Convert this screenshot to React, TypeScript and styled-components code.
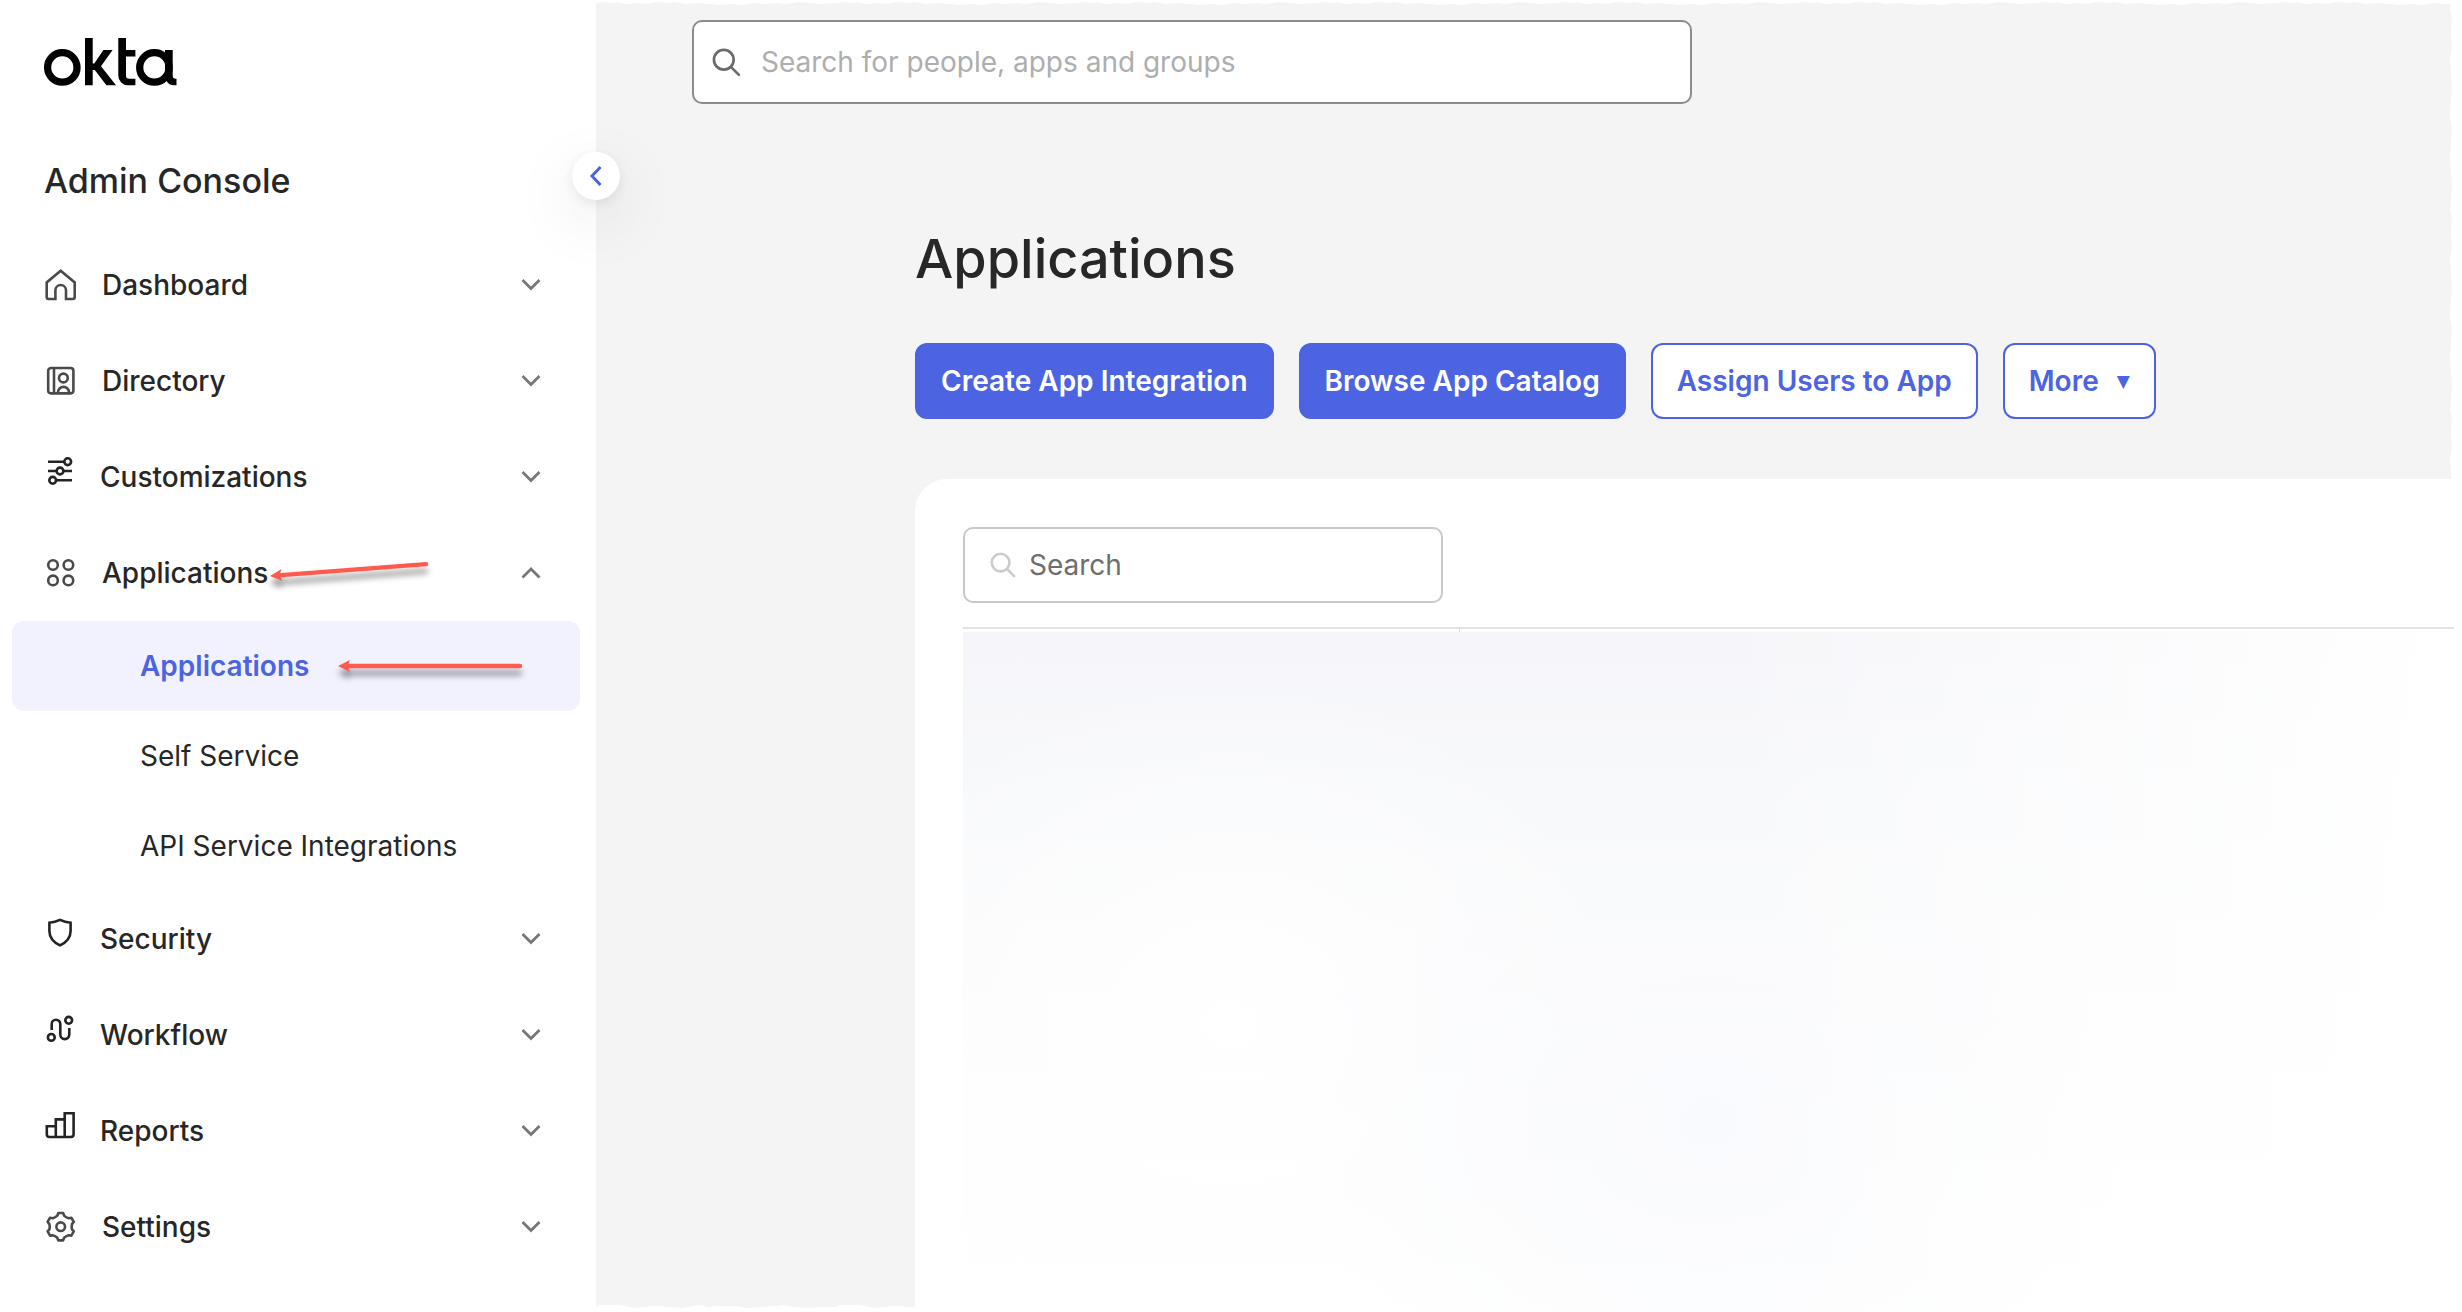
import React, { useState } from "react";
import styled, { createGlobalStyle, css } from "styled-components";

const color = {
  ink: "#272727",
  icon: "#4a4a4a",
  iconDark: "#242424",
  chevron: "#777777",
  blue: "#4c64e1",
  blueTint: "#f2f2ff",
  page: "#f4f4f4",
  line: "#e1e1e1",
  arrow: "#ff5a4c",
};

const GlobalStyle = createGlobalStyle`
  * { box-sizing: border-box; }
  body {
    margin: 0;
    background: #ffffff;
    color: ${color.ink};
    font-family: Inter, "Liberation Sans", sans-serif;
    font-size: 28px;
    line-height: 36px;
  }
  button, input { font: inherit; }
`;

/* ---------- layout ---------- */

const Shell = styled.div`
  display: grid;
  grid-template-columns: 596px minmax(0, 1fr);
  min-height: 100vh;
`;

const Sidebar = styled.aside`
  position: relative;
  display: flex;
  flex-direction: column;
  padding: 38px 0 36px;
  background: #ffffff;
  z-index: 1;
`;

const Brand = styled.a`
  display: block;
  width: 133px;
  height: 48px;
  margin-left: 44px;
`;

const ConsoleTitle = styled.h2`
  margin: 73px 0 0 44px;
  font-size: 34px;
  line-height: 44px;
  font-weight: 500;
`;

const CollapseButton = styled.button`
  position: absolute;
  top: 152px;
  right: -24px;
  display: grid;
  place-items: center;
  width: 48px;
  height: 48px;
  padding: 0;
  border: 0;
  border-radius: 50%;
  background: #ffffff;
  box-shadow: 0 4px 12px rgba(0, 0, 0, 0.08), 0 20px 60px 12px rgba(0, 0, 0, 0.05);
  cursor: pointer;
`;

const NavList = styled.ul`
  margin: 34px 0 0;
  padding: 0;
  list-style: none;
`;

const SubList = styled.ul`
  margin: 0;
  padding: 0 16px 0 12px;
  list-style: none;
`;

const NavButton = styled.button<{ $compact?: boolean }>`
  position: relative;
  display: flex;
  align-items: center;
  gap: ${(p) => (p.$compact ? 24 : 26)}px;
  width: 100%;
  height: 96px;
  padding: 0 54px 0 44px;
  border: 0;
  background: none;
  color: inherit;
  font-weight: 500;
  text-align: left;
  cursor: pointer;
`;

const IconSlot = styled.span<{ $compact?: boolean }>`
  display: flex;
  color: ${(p) => (p.$compact ? color.iconDark : color.icon)};
  padding-bottom: ${(p) => (p.$compact ? 12 : 0)}px;
`;

const NavLabel = styled.span`
  flex: 1;
`;

const SubLink = styled.a<{ $active?: boolean }>`
  position: relative;
  display: flex;
  align-items: center;
  height: 90px;
  padding-left: 128px;
  border-radius: 12px;
  color: inherit;
  text-decoration: none;
  ${(p) =>
    p.$active &&
    css`
      background: ${color.blueTint};
      color: ${color.blue};
      font-weight: 600;
    `}
`;

const Pointer = styled.svg<{ $left: number; $top: number }>`
  position: absolute;
  left: ${(p) => p.$left}px;
  top: ${(p) => p.$top}px;
  overflow: visible;
  filter: drop-shadow(0 7px 3px rgba(0, 0, 0, 0.45));
  pointer-events: none;
`;

const Main = styled.main`
  position: relative;
  display: flex;
  flex-direction: column;
  margin-right: 8px;
  padding-top: 20px;
  background: ${color.page};
`;

const Tear = styled.svg<{ $edge: "top" | "right" | "bottom" }>`
  position: absolute;
  ${(p) =>
    p.$edge === "right"
      ? css`
          top: 0;
          right: 0;
          width: 4px;
          height: 100%;
        `
      : css`
          ${p.$edge}: 0;
          left: 0;
          width: 100%;
          height: 8px;
        `}
`;

const GlobalSearch = styled.label`
  display: flex;
  align-items: center;
  gap: 20px;
  width: 1000px;
  max-width: calc(100% - 96px);
  height: 84px;
  margin-left: 96px;
  padding: 0 18px;
  border: 2px solid #8c8c8c;
  border-radius: 10px;
  background: #ffffff;
  color: #6b6b6b;
`;

const TextInput = styled.input<{ $tone: string }>`
  flex: 1;
  min-width: 0;
  height: 36px;
  padding: 0;
  border: 0;
  outline: 0;
  background: none;
  color: ${color.ink};
  &::placeholder {
    color: ${(p) => p.$tone};
    opacity: 1;
  }
`;

const Content = styled.section`
  display: flex;
  flex: 1;
  flex-direction: column;
  padding: 119px 0 0 319px;
`;

const PageTitle = styled.h1`
  margin: 0;
  font-size: 54px;
  line-height: 72px;
  font-weight: 500;
`;

const Actions = styled.div`
  display: flex;
  flex-wrap: wrap;
  gap: 25px;
  margin-top: 48px;
`;

const ActionButton = styled.button<{ $primary?: boolean }>`
  display: flex;
  align-items: center;
  gap: 18px;
  height: 76px;
  padding: 0 24px;
  border: 2px solid ${color.blue};
  border-radius: 12px;
  background: ${(p) => (p.$primary ? color.blue : "#ffffff")};
  color: ${(p) => (p.$primary ? "#ffffff" : color.blue)};
  font-weight: 600;
  white-space: nowrap;
  cursor: pointer;
`;

const Caret = styled.span`
  font-family: "DejaVu Sans", sans-serif;
  font-size: 17px;
  line-height: 20px;
`;

const Card = styled.div`
  display: flex;
  flex: 1;
  flex-direction: column;
  position: relative;
  margin-top: 60px;
  padding: 48px 0 0 48px;
  border-radius: 32px 0 0 0;
  background: #ffffff;
`;

const CardSearch = styled.label`
  display: flex;
  align-items: center;
  gap: 13px;
  width: 480px;
  height: 76px;
  padding: 0 25px;
  border: 2px solid #c8c8c8;
  border-radius: 10px;
  color: #cbcbcb;
`;

const TableHead = styled.div`
  height: 5px;
  margin-top: 24px;
  border-top: 2px solid ${color.line};
  &::before {
    content: "";
    display: block;
    width: 496px;
    height: 3px;
    border-right: 1px solid ${color.line};
  }
`;

const TableHaze = styled.div`
  flex: 1;
  min-height: 300px;
  background:
    linear-gradient(90deg, rgba(255, 255, 255, 0) 50%, rgba(255, 255, 255, 0.7) 85%, #ffffff 100%),
    radial-gradient(ellipse 420px 330px at 50% 72%, rgba(249, 250, 253, 0.9), rgba(255, 255, 255, 0)),
    radial-gradient(ellipse 420px 360px at 18% 58%, rgba(255, 255, 255, 0.9), rgba(255, 255, 255, 0)),
    linear-gradient(180deg, #f6f6fa 0%, #f8f9fb 25%, #fbfbfc 48%, #fdfdfe 70%, #ffffff 100%);
`;

/* ---------- drawings ---------- */

const OktaLogo = () => (
  <svg width="133" height="48" viewBox="0 0 133 48" role="img" aria-label="okta">
    <g fill="none" stroke="#000" strokeWidth="7.3">
      <circle cx="18.3" cy="29.4" r="14.7" />
      <circle cx="110.4" cy="29.4" r="14.7" />
    </g>
    <path d="M41 0h7.7v25.5h1.6L59.4 12h9.2L57 28.2l15 19.1h-9.6L50.8 32h-2.1v15.3H41Z" />
    <path d="M74.3 0H82v12h9.4v6.4H82v19.1a3.2 3.2 0 0 0 3.2 3.2h6.2v6.6H84a9.7 9.7 0 0 1-9.7-9.7Z" />
    <path d="M121 12h7.7v25.5a3.2 3.2 0 0 0 3.2 3.2h.6v6.6h-2.2c-3.6 0-6.4-1.6-7.7-4.4L121 36Z" />
  </svg>
);

const gearPath = (() => {
  const at = (deg: number, r: number) => {
    const a = (deg * Math.PI) / 180;
    return `${(15.7 + r * Math.cos(a)).toFixed(2)} ${(15.7 + r * Math.sin(a)).toFixed(2)}`;
  };
  let d = `M${at(-100, 13.9)}`;
  for (let i = 0; i < 6; i++) {
    const t = -90 + i * 60;
    d += `L${at(t + 10, 13.9)}L${at(t + 17, 11.6)}Q${at(t + 30, 10.6)} ${at(t + 43, 11.6)}L${at(t + 50, 13.9)}`;
  }
  return d + "Z";
})();

const drawings: Record<string, React.ReactNode> = {
  home: (
    <path d="M15.7 1.7 29.7 13.4V28a2 2 0 0 1-2 2H21v-8.7a5.3 5.3 0 0 0-10.6 0V30H3.7a2 2 0 0 1-2-2V13.4Z" />
  ),
  directory: (
    <>
      <rect x="3.2" y="3" width="25.2" height="25.4" rx="2.8" />
      <path d="M9 3v25.4M13 28.4v-1a5.5 5.5 0 0 1 11 0v1" />
      <circle cx="18.4" cy="13" r="4.4" />
    </>
  ),
  sliders: (
    <>
      <path d="M3 6.7h16.3M3 16h8.6M18.4 16H27M11.1 25.3H27" />
      <circle cx="22.7" cy="6.7" r="3.4" />
      <circle cx="15" cy="16" r="3.4" />
      <circle cx="7.7" cy="25.3" r="3.4" />
    </>
  ),
  apps: (
    <>
      <circle cx="8" cy="8" r="4.8" />
      <circle cx="23.4" cy="8" r="4.8" />
      <circle cx="8" cy="23.4" r="4.8" />
      <circle cx="23.4" cy="23.4" r="4.8" />
    </>
  ),
  shield: (
    <path d="M15 2.9Q10 5.3 4.4 5.7V14C4.4 20.5 9 25.5 15 28.4 21 25.5 25.6 20.5 25.6 14V5.7Q20 5.3 15 2.9Z" />
  ),
  workflow: (
    <>
      <path d="M6.7 17v-6a4.3 4.3 0 0 1 8.6 0v10.6a4.5 4.5 0 0 0 9 0V15" />
      <circle cx="23.7" cy="7.3" r="3.4" />
      <circle cx="6.3" cy="24.4" r="3.4" />
    </>
  ),
  reports: (
    <path d="M10.8 17.3H1.8v7.9A2.8 2.8 0 0 0 4.6 28h21.2a2.8 2.8 0 0 0 2.8-2.8V4.3h-8.9V28M19.7 10.4h-8.9V28" />
  ),
  gear: (
    <>
      <path d={gearPath} strokeLinejoin="round" />
      <circle cx="15.7" cy="15.7" r="4.3" />
    </>
  ),
};

const NavIcon = ({ name }: { name: string }) => (
  <svg
    width="32"
    height="32"
    viewBox="-1 0 32 32"
    fill="none"
    stroke="currentColor"
    strokeWidth="2.6"
    aria-hidden="true"
  >
    {drawings[name]}
  </svg>
);

const Chevron = ({ up }: { up?: boolean }) => (
  <svg width="22" height="14" viewBox="0 0 22 14" fill="none" stroke={color.chevron} strokeWidth="2.8" aria-hidden="true">
    <path d={up ? "M2.5 11.5 11 3l8.5 8.5" : "M2.5 2 11 10.5 19.5 2"} />
  </svg>
);

const Magnifier = ({ size, weight }: { size: number; weight: number }) => (
  <svg
    width={size}
    height={size}
    viewBox="0 0 30 30"
    fill="none"
    stroke="currentColor"
    strokeWidth={weight}
    strokeLinecap="round"
    aria-hidden="true"
  >
    <circle cx="12.2" cy="12.2" r="10.2" />
    <path d="m19.8 19.8 8 8" />
  </svg>
);

const ArrowLeft = ({ left, top, width, rise }: { left: number; top: number; width: number; rise: number }) => {
  const tilt = (Math.atan2(-rise, width) * 180) / Math.PI;
  const length = Math.hypot(width, rise);
  return (
    <Pointer $left={left} $top={top} width={width} height="14" viewBox={`0 -7 ${width} 14`} aria-hidden="true">
      <g transform={`rotate(${tilt})`} fill={color.arrow}>
        <path d="M0 0 12-6 9.5 0 12 6Z" />
        <path d={`M8 0H${length - 2}`} stroke={color.arrow} strokeWidth="4.4" strokeLinecap="round" />
      </g>
    </Pointer>
  );
};

const TornEdge = ({ edge }: { edge: "top" | "right" | "bottom" }) => {
  const id = `tear-${edge}`;
  const vertical = edge === "right";
  const shapes = {
    top: "M0 0V3L9 2 14 3 22 2 30 4 42 3 50 4 61 2 70 3 78 2 90 4 104 3 115 4 122 5 134 4 146 5 158 3 170 4 181 3 190 4 203 2 214 3 226 4 240 3V0Z",
    right: "M4 0H1L0 9 2 20 1 34 2 46 0 58 1 72 2 88 1 100 0 116 2 130 1 142 0 158 1 172 2 186 1 200H4Z",
    bottom: "M0 8V3L4 1 22 1 30 2 38 4 48 3 60 2 72 3 86 4 98 2 106 1 112 3 124 2 140 2 152 4 166 3 180 2 188 1 198 3 212 4 226 3 240 3V8Z",
  };
  return (
    <Tear $edge={edge} aria-hidden="true">
      <defs>
        <pattern id={id} patternUnits="userSpaceOnUse" width={vertical ? 4 : 240} height={vertical ? 200 : 8}>
          <path d={shapes[edge]} fill="#ffffff" />
        </pattern>
      </defs>
      <rect width="100%" height="100%" fill={`url(#${id})`} />
    </Tear>
  );
};

/* ---------- page ---------- */

type Item = { label: string; icon: string; compact?: boolean; children?: string[] };

const items: Item[] = [
  { label: "Dashboard", icon: "home" },
  { label: "Directory", icon: "directory" },
  { label: "Customizations", icon: "sliders", compact: true },
  {
    label: "Applications",
    icon: "apps",
    children: ["Applications", "Self Service", "API Service Integrations"],
  },
  { label: "Security", icon: "shield", compact: true },
  { label: "Workflow", icon: "workflow", compact: true },
  { label: "Reports", icon: "reports", compact: true },
  { label: "Settings", icon: "gear" },
];

export default function App() {
  const [open, setOpen] = useState("Applications");

  return (
    <>
      <GlobalStyle />
      <Shell>
        <Sidebar>
          <Brand href="#home">
            <OktaLogo />
          </Brand>
          <ConsoleTitle>Admin Console</ConsoleTitle>
          <CollapseButton aria-label="Collapse menu">
            <svg width="14" height="22" viewBox="0 0 14 22" fill="none" stroke={color.blue} strokeWidth="3">
              <path d="M11.5 2 3 11l8.5 9" />
            </svg>
          </CollapseButton>
          <nav aria-label="Admin">
            <NavList>
              {items.map((item) => {
                const expanded = open === item.label;
                return (
                  <li key={item.label}>
                    <NavButton
                      $compact={item.compact}
                      aria-expanded={expanded}
                      onClick={() => setOpen(expanded ? "" : item.label)}
                    >
                      <IconSlot $compact={item.compact}>
                        <NavIcon name={item.icon} />
                      </IconSlot>
                      <NavLabel>{item.label}</NavLabel>
                      <Chevron up={expanded} />
                      {item.children && <ArrowLeft left={270} top={44} width={158} rise={12} />}
                    </NavButton>
                    {expanded && item.children && (
                      <SubList>
                        {item.children.map((child, i) => (
                          <li key={child}>
                            <SubLink href={`#${child}`} $active={i === 0}>
                              {child}
                              {i === 0 && <ArrowLeft left={326} top={38} width={184} rise={0} />}
                            </SubLink>
                          </li>
                        ))}
                      </SubList>
                    )}
                  </li>
                );
              })}
            </NavList>
          </nav>
        </Sidebar>

        <Main>
          <TornEdge edge="top" />
          <TornEdge edge="right" />
          <TornEdge edge="bottom" />
          <GlobalSearch>
            <Magnifier size={29} weight={2.8} />
            <TextInput
              $tone="#aeaeae"
              type="text"
              aria-label="Search for people, apps and groups"
              placeholder="Search for people, apps and groups"
            />
          </GlobalSearch>
          <Content>
            <PageTitle>Applications</PageTitle>
            <Actions>
              <ActionButton $primary>Create App Integration</ActionButton>
              <ActionButton $primary>Browse App Catalog</ActionButton>
              <ActionButton>Assign Users to App</ActionButton>
              <ActionButton>
                More <Caret>▼</Caret>
              </ActionButton>
            </Actions>
            <Card>
              <CardSearch>
                <Magnifier size={26} weight={3} />
                <TextInput $tone="#6e6e6e" type="text" aria-label="Search" placeholder="Search" />
              </CardSearch>
              <TableHead />
              <TableHaze />
            </Card>
          </Content>
        </Main>
      </Shell>
    </>
  );
}
